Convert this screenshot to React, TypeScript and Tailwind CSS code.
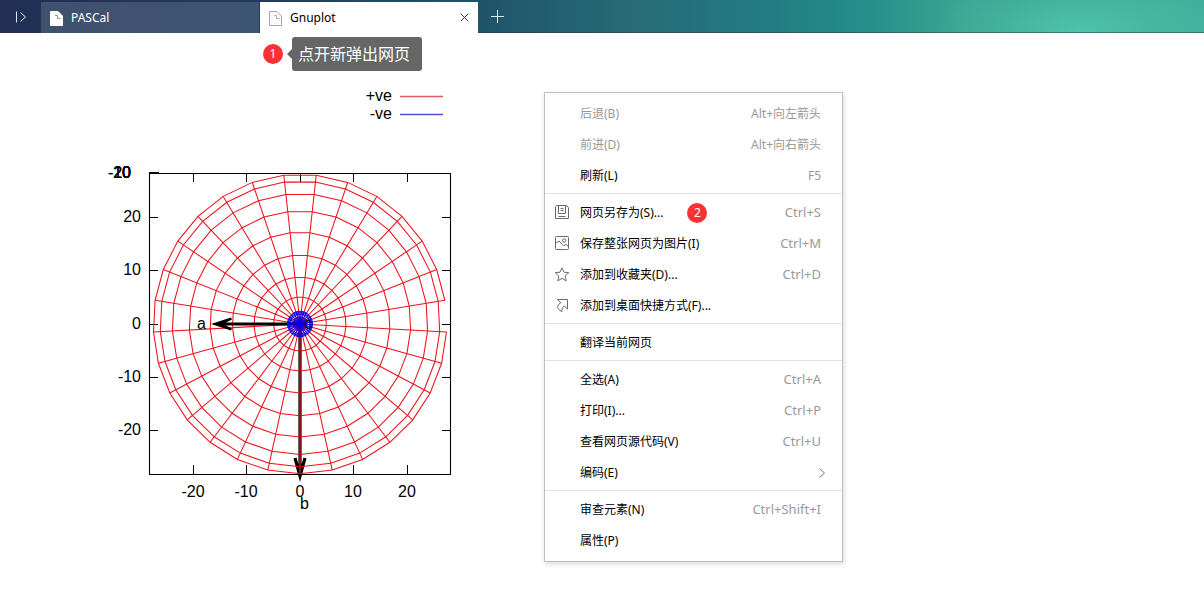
import React from "react";

const CX = 300;
const CY = 324;
const SPOKES = 29;
const RINGS = [149.7, 142.8, 130.4, 113, 91.8, 69, 46.9, 26.9];
const BLUE_RINGS = [12.8, 12, 11, 9.8, 7, 5.5, 3.8, 2];

type Point = [number, number];

function vertex(radius: number, index: number): Point {
  const t = (index * 2 * Math.PI) / SPOKES;
  const s = Math.sin(t);
  const r = radius * (1 - 0.02 * s * s);
  return [CX + r * s, CY + r * Math.cos(t)];
}

function fmt([x, y]: Point): string {
  return `${x.toFixed(1)} ${y.toFixed(1)}`;
}

function ringPath(radius: number, start: number, edges: number): string {
  const points = Array.from({ length: edges + 1 }, (_, i) => fmt(vertex(radius, start + i)));
  return "M" + points.join("L");
}

function spokePath(radius: number): string {
  return Array.from({ length: SPOKES }, (_, i) => `M${CX} ${CY}L${fmt(vertex(radius, i))}`).join("");
}

const TICKS = [
  { label: "-20", x: 193, y: 430 },
  { label: "-10", x: 246, y: 377 },
  { label: "0", x: 300, y: 324 },
  { label: "10", x: 353, y: 270 },
  { label: "20", x: 407, y: 217 },
];

function Plot() {
  return (
    <svg
      className="ml-[100px] mt-[47px] h-[440px] w-[380px] shrink-0"
      viewBox="100 80 380 440"
      role="img"
      aria-label="Gnuplot"
      fontFamily='"Liberation Sans", Arial, sans-serif'
      fontSize="16"
      fill="#000"
    >
      <g textAnchor="end">
        <text x="392" y="101">+ve</text>
        <text x="392" y="119">-ve</text>
        {TICKS.map((t) => (
          <text key={t.label} x="141" y={t.y + 5}>{t.label}</text>
        ))}
        {TICKS.map((t) => (
          <text key={t.label} x="131" y="178">{t.label}</text>
        ))}
      </g>
      <g textAnchor="middle">
        {TICKS.map((t) => (
          <text key={t.label} x={t.x} y="497">{t.label}</text>
        ))}
      </g>
      <path d="M400 96.5H443" stroke="#e4595f" strokeWidth="1.5" />
      <path d="M400 114.5H443" stroke="#5252d8" strokeWidth="1.5" />
      <g fill="none" stroke="#000">
        <path d="M149.5 173.5H450.5V474.5H149.5Z" strokeWidth="1.1" />
        <path d="M149 173H159" strokeWidth="2" />
        {TICKS.map((t) => (
          <path
            key={t.label}
            d={`M${t.x + 0.5} 174v8M${t.x + 0.5} 474v-9M150 ${t.y + 0.5}h8M450 ${t.y + 0.5}h-8`}
          />
        ))}
      </g>
      <path d="M300 324V475M295 458L300 476L305 458" fill="none" stroke="#000" strokeWidth="3.2" />
      <g fill="none" stroke="#f0101a" strokeWidth="1.05">
        <path d={spokePath(RINGS[0])} />
        <path d={ringPath(RINGS[0], 8, 28)} />
        {RINGS.slice(1).map((r) => (
          <path key={r} d={ringPath(r, 0, SPOKES)} />
        ))}
      </g>
      <path d="M300 324V474" stroke="#8c1216" strokeWidth="2" />
      <path d="M298 324H218" stroke="#000" strokeWidth="3" />
      <path d="M211 324L231 317.500L232 319.500L226 322.500V325.500L232 328.500L231 330.500Z" fill="#000" />
      <g fill="none" stroke="#0000f5" strokeWidth="0.9">
        <path d={spokePath(BLUE_RINGS[0])} />
        {BLUE_RINGS.map((r) => (
          <path key={r} d={ringPath(r, 0, SPOKES)} />
        ))}
      </g>
      <text x="197" y="329">a</text>
      <text x="300" y="509">b</text>
      <text x="304" y="329" fill="#00003c">c</text>
    </svg>
  );
}

function Badge({ children, className = "" }: { children: React.ReactNode; className?: string }) {
  return (
    <span
      className={`flex size-5 shrink-0 items-center justify-center rounded-full bg-[#fc3134] text-xs leading-none text-white ${className}`}
    >
      {children}
    </span>
  );
}

function PageIcon({ active = false }: { active?: boolean }) {
  return (
    <svg viewBox="0 0 13 15" className="h-[15px] w-[13px] shrink-0" fill={active ? "#fafafa" : "#fff"} stroke={active ? "#a5a5a5" : "#fff"}>
      <path d="M.5.5H8L12.500 5V14.500H.5Z" />
      <path d="M5 4.500H7.500V7.500H10.500" fill="none" stroke={active ? "#b5b5b5" : "#8d98ac"} />
    </svg>
  );
}

function SaveIcon() {
  return (
    <>
      <path d="M1.500.5H11.500L13.500 2.500V13.500H.5V1.500Z" />
      <path d="M3.500.5V8.500H10.500V.5M5.500 3.500H8.500M5.500 5.500H8.500M3.500 11.500H10.500" />
    </>
  );
}

function ImageIcon() {
  return (
    <>
      <rect x=".5" y=".5" width="13" height="13" rx="1" />
      <path d="M.5 7.500L4 5L8.500 9.800L11 8.500L13.500 10.500" />
      <circle cx="9.200" cy="4.500" r="1.700" />
    </>
  );
}

function StarIcon() {
  return <path d="M7 .8L9 5.200L13.800 5.700L10.200 9L11.200 13.800L7 11.400L2.800 13.800L3.800 9L.2 5.700L5 5.200Z" />;
}

function ShortcutIcon() {
  return <path d="M2.500 1.500H12.500V11L9.200 8C7.300 9.500 6.600 11.500 7 13.500C4 12.500 2.300 10.300 2.800 8.200C3.300 6.500 4.500 5.500 5.800 4.800Z" />;
}

type Item = { label: string; keys?: string; icon?: React.ReactNode; disabled?: boolean; badge?: string; more?: boolean };

const GROUPS: Item[][] = [
  [
    { label: "后退(B)", keys: "Alt+向左箭头", disabled: true },
    { label: "前进(D)", keys: "Alt+向右箭头", disabled: true },
    { label: "刷新(L)", keys: "F5" },
  ],
  [
    { label: "网页另存为(S)...", keys: "Ctrl+S", icon: <SaveIcon />, badge: "2" },
    { label: "保存整张网页为图片(I)", keys: "Ctrl+M", icon: <ImageIcon /> },
    { label: "添加到收藏夹(D)...", keys: "Ctrl+D", icon: <StarIcon /> },
    { label: "添加到桌面快捷方式(F)...", icon: <ShortcutIcon /> },
  ],
  [{ label: "翻译当前网页" }],
  [
    { label: "全选(A)", keys: "Ctrl+A" },
    { label: "打印(I)...", keys: "Ctrl+P" },
    { label: "查看网页源代码(V)", keys: "Ctrl+U" },
    { label: "编码(E)", more: true },
  ],
  [{ label: "审查元素(N)", keys: "Ctrl+Shift+I" }, { label: "属性(P)" }],
];

function MenuItem({ item }: { item: Item }) {
  return (
    <button
      type="button"
      role="menuitem"
      disabled={item.disabled}
      className={`flex h-[31px] w-full items-center pl-[10px] pr-[21px] text-left ${item.disabled ? "text-[#999]" : "text-black"}`}
    >
      <span className="w-[25px] shrink-0">
        {item.icon && (
          <svg viewBox="0 0 15 15" className="size-[15px]" fill="none" stroke="#6a6a6a">
            {item.icon}
          </svg>
        )}
      </span>
      <span>{item.label}</span>
      {item.badge && <Badge className="ml-6">{item.badge}</Badge>}
      {item.keys && (
        <span className={`ml-auto text-[#999] ${item.keys.startsWith("Ctrl") ? "text-[13px]" : "text-xs"}`}>{item.keys}</span>
      )}
      {item.more && (
        <svg viewBox="0 0 6 10" className="-mr-1 ml-auto h-[10px] w-[6px]" fill="none" stroke="#777">
          <path d="M.5.5L5.500 5L.5 9.500" />
        </svg>
      )}
    </button>
  );
}

export default function App() {
  return (
    <div className="min-h-screen bg-white font-['Noto_Sans','Noto_Sans_CJK_SC',sans-serif] text-xs text-black">
      <header className="flex h-[33px] items-end bg-[radial-gradient(ellipse_150px_60px_at_1080px_32px,#4fc4a9,rgba(79,196,169,0.4)_50%,rgba(79,196,169,0)),linear-gradient(90deg,#202e54_0%,#243a5c_22%,#20566a_41%,#276a76_52%,#227c82_64%,#268e8a_72%,#3aa593_80%,#40b09c_100%)] shadow-[inset_0_-1px_0_rgba(50,50,60,0.5)]">
        <button type="button" aria-label="Show tabs" className="flex h-full w-[41px] items-center justify-center">
          <svg viewBox="0 0 12 12" className="size-3" fill="none" stroke="#e4e8f0">
            <path d="M1.500 .5V11.500M5.500 1.500L10.500 6L5.500 10.500" />
          </svg>
        </button>
        <nav className="flex h-[31px]" aria-label="Tabs">
          <button type="button" className="flex w-[218px] items-center gap-2 bg-[linear-gradient(90deg,#41506f,#3c5572)] pl-[9px] pt-px text-white">
            <PageIcon />
            <span>PASCal</span>
          </button>
          <div className="ml-px flex w-[218px] items-center bg-white pl-[9px] pr-[9px]">
            <button type="button" className="flex grow items-center gap-2 pt-px">
              <PageIcon active />
              <span>Gnuplot</span>
            </button>
            <button type="button" aria-label="Close tab">
              <svg viewBox="0 0 9 9" className="size-[9px]" fill="none" stroke="#333">
                <path d="M.8.8L8.200 8.200M8.200.8L.8 8.200" />
              </svg>
            </button>
          </div>
        </nav>
        <button type="button" aria-label="New tab" className="ml-[13px] flex h-full items-center">
          <svg viewBox="0 0 13 13" className="size-[13px]" fill="none" stroke="#dce8ec">
            <path d="M0 6.500H13M6.500 0V13" />
          </svg>
        </button>
      </header>
      <main className="relative flex items-start">
        <Plot />
        <div className="absolute left-[263px] top-1 flex items-center">
          <Badge>1</Badge>
          <svg viewBox="0 0 5 10" className="ml-1 h-[10px] w-[5px]" fill="#666">
            <path d="M5 0V10L0 5Z" />
          </svg>
          <p className="flex h-[34px] w-[130px] items-center rounded-[3px] bg-[#666] pl-[6px] text-base text-white">点开新弹出网页</p>
        </div>
        <div role="menu" className="ml-16 mt-[59px] w-[299px] border border-[#bfbfbf] bg-white pb-[3px] pt-[5px] shadow-[1px_2px_5px_rgba(0,0,0,0.15)]">
          {GROUPS.map((group, i) => (
            <div key={i} role="group" className={i ? "border-t border-[#e2e2e2] pb-[2px] pt-[3px]" : "pb-[2px]"}>
              {group.map((item) => (
                <MenuItem key={item.label} item={item} />
              ))}
            </div>
          ))}
        </div>
      </main>
    </div>
  );
}
